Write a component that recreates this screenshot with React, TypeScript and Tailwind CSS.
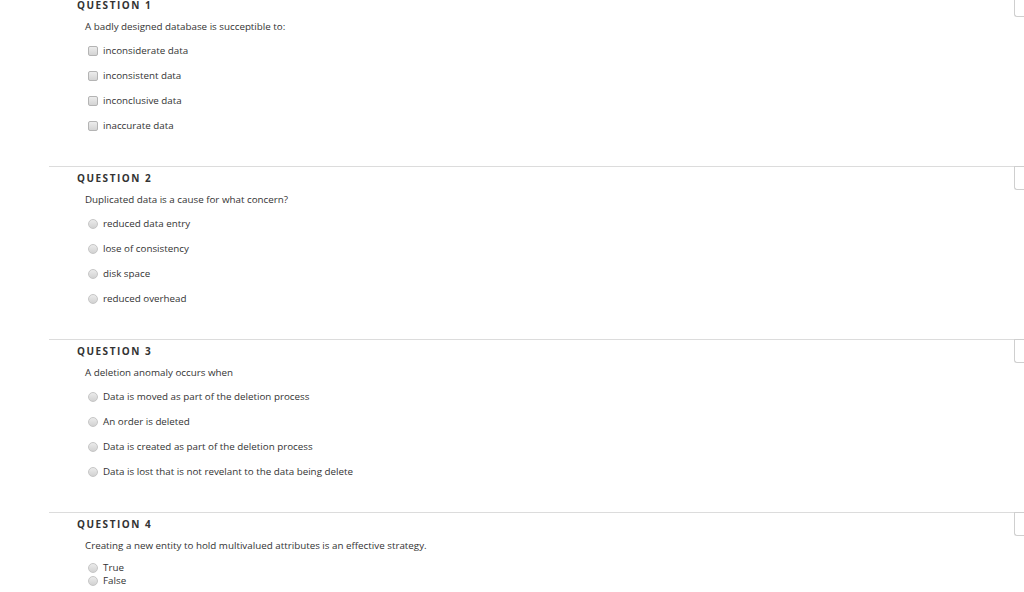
import React from 'react';

type Question = {
  num: number;
  text: string;
  kind: 'checkbox' | 'radio';
  options: string[];
  compact?: boolean;
};

const questions: Question[] = [
  {
    num: 1,
    text: 'A badly designed database is succeptible to:',
    kind: 'checkbox',
    options: ['inconsiderate data', 'inconsistent data', 'inconclusive data', 'inaccurate data'],
  },
  {
    num: 2,
    text: 'Duplicated data is a cause for what concern?',
    kind: 'radio',
    options: ['reduced data entry', 'lose of consistency', 'disk space', 'reduced overhead'],
  },
  {
    num: 3,
    text: 'A deletion anomaly occurs when',
    kind: 'radio',
    options: [
      'Data is moved as part of the deletion process',
      'An order is deleted',
      'Data is created as part of the deletion process',
      'Data is lost that is not revelant to the data being delete',
    ],
  },
  {
    num: 4,
    text: 'Creating a new entity to hold multivalued attributes is an effective strategy.',
    kind: 'radio',
    options: ['True', 'False'],
    compact: true,
  },
];

const Box = ({ kind }: { kind: 'checkbox' | 'radio' }) =>
  kind === 'checkbox' ? (
    <span className="inline-block w-[10px] h-[10px] border border-[#b4b4b4] rounded-[2px] bg-gradient-to-b from-[#ececec] to-[#d4d4d4] shrink-0" />
  ) : (
    <span className="inline-block w-[10px] h-[10px] border border-[#c6c6c6] rounded-full bg-gradient-to-b from-[#ebebeb] to-[#d2d2d2] shrink-0" />
  );

const QuestionBlock = ({ q, first }: { q: Question; first: boolean }) => (
  <div className={`flex h-[173px] ${first ? 'mt-[-7px]' : ''}`}>
    <div className="flex-1 border-t border-[#dcdcdc] pl-[28px]">
      <div className="pt-[5px] text-[10px] font-bold tracking-[1.5px] text-[#333] leading-[12px]">
        QUESTION {q.num}
      </div>
      <div className="pl-[8px] mt-[10px] text-[9.8px] text-[#333] leading-[12px]">{q.text}</div>
      <div className={`pl-[11px] flex flex-col ${q.compact ? 'mt-[10px] gap-[1px]' : 'mt-[12px] gap-[13px]'}`}>
        {q.options.map((o) => (
          <label key={o} className="flex items-center gap-[5px] text-[9.8px] text-[#333] leading-[12px]">
            <Box kind={q.kind} />
            <span>{o}</span>
          </label>
        ))}
      </div>
    </div>
    <div className="w-[10px] h-[24px] border border-r-0 border-[#cfcfcf] rounded-bl-[3px]" />
  </div>
);

export default function App() {
  return (
    <div
      className="w-[1024px] h-[592px] overflow-hidden bg-white pl-[49px]"
      style={{ fontFamily: '"Open Sans", "Liberation Sans", Arial, sans-serif' }}
    >
      {questions.map((q, i) => (
        <QuestionBlock key={q.num} q={q} first={i === 0} />
      ))}
    </div>
  );
}
